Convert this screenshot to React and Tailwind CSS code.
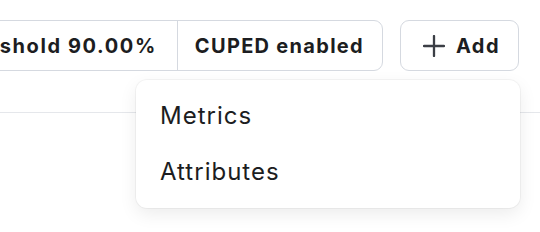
const PlusIcon = () => (
  <svg width="22" height="22" viewBox="0 0 22 22" fill="none" className="shrink-0">
    <path d="M11 1v20M1 11h20" stroke="#3b3e45" strokeWidth="2.3" strokeLinecap="round" />
  </svg>
);

const App = () => {
  return (
    <div
      className="relative h-[232px] w-[540px] overflow-hidden bg-white text-[#1c1d21]"
      style={{ fontFamily: "Inter, 'Noto Sans', sans-serif" }}
    >
      {/* toolbar */}
      <div className="flex justify-end gap-[17px] pt-5 pr-[21px]">
        <div className="flex h-[51px] shrink-0 items-stretch rounded-[9px] border border-[#d5d9e0]">
          <div className="flex shrink-0 items-center whitespace-nowrap border-r border-[#d5d9e0] pr-5 pl-5 text-[20px] font-bold tracking-[0.08em]">
            Threshold 90.00%
          </div>
          <div className="flex shrink-0 items-center whitespace-nowrap pr-[18px] pl-[17px] text-[20px] font-bold tracking-[0.065em]">
            CUPED enabled
          </div>
        </div>
        <button className="flex h-[51px] w-[119px] shrink-0 items-center gap-[11px] rounded-[9px] border border-[#d5d9e0] pl-[22px] text-[20px] font-bold tracking-[0.07em]">
          <PlusIcon />
          Add
        </button>
      </div>

      {/* divider under toolbar */}
      <div className="mt-[41px] border-t border-[#e5e7eb]" />

      {/* add menu */}
      <div className="absolute top-20 left-[136px] w-[384px] rounded-[11px] bg-white py-2 shadow-[0_6px_18px_rgba(0,0,0,0.08)] ring-1 ring-black/[0.04]">
        <div className="flex h-14 items-center px-6 text-[24px] tracking-[0.042em]">Metrics</div>
        <div className="flex h-14 items-center px-6 text-[24px] tracking-[0.042em]">Attributes</div>
      </div>
    </div>
  );
};

export default App;
